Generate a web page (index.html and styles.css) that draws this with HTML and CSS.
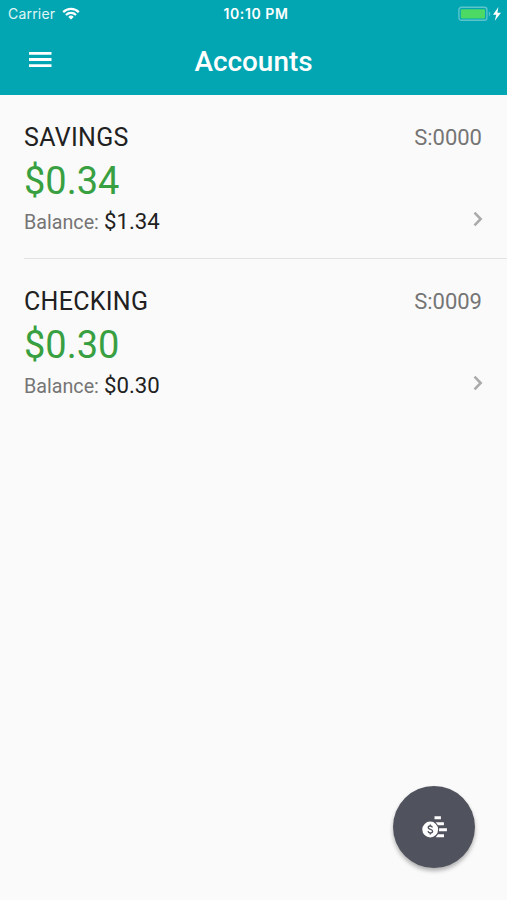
FILE: index.html
```
<!DOCTYPE html>
<html lang="en">
<head>
<meta charset="utf-8">
<title>Accounts</title>
<link rel="stylesheet" href="styles.css">
</head>
<body>
<header class="header">
  <div class="status">
    <div class="carrier"><span>Carrier</span>
      <svg class="wifi" width="18" height="13" viewBox="0 0 18 13" fill="none" stroke="#fff" stroke-width="2.2"><path d="M1.2 5.1a11 11 0 0 1 15.6 0M4 8a7 7 0 0 1 10 0"/><path d="M9 12.6 6.3 9.9a3.8 3.8 0 0 1 5.4 0z" fill="#fff" stroke="none"/></svg>
    </div>
    <div class="time">10:10 PM</div>
    <div class="power">
      <svg width="44" height="16" viewBox="0 0 44 16"><rect x=".9" y="1.3" width="28" height="13" rx="2.6" fill="none" stroke="#5cc5cc" stroke-width="1.4"/><rect x="2.8" y="3.2" width="24.2" height="9.2" rx=".8" fill="#4cd964"/><path d="M30.8 5.6c2 .7 2 3.9 0 4.6z" fill="#5cc5cc"/><path d="M40.4 1 35 8.7h3.3l-1.5 6 6.2-8h-3.6z" fill="#fff"/></svg>
    </div>
  </div>
  <div class="toolbar">
    <svg class="menu" width="23" height="17" viewBox="0 0 23 17" fill="#fff"><path d="M0 1h22.5v2.8H0zM0 7.1h22.5v2.8H0zM0 13.2h22.5V16H0z"/></svg>
    <h1 class="title">Accounts</h1>
  </div>
</header>
<main class="accounts">
  <section class="account">
    <div class="row"><h2 class="name">SAVINGS</h2><span class="code">S:0000</span></div>
    <div class="amount">$0.34</div>
    <div class="row foot"><div><span class="label">Balance:</span> <span class="value">$1.34</span></div>
      <svg class="chevron" width="10" height="16" viewBox="0 0 10 16"><path d="m1.5 1.7 6.2 6.3-6.2 6.3"/></svg></div>
  </section>
  <section class="account">
    <div class="row"><h2 class="name">CHECKING</h2><span class="code">S:0009</span></div>
    <div class="amount">$0.30</div>
    <div class="row foot"><div><span class="label">Balance:</span> <span class="value">$0.30</span></div>
      <svg class="chevron" width="10" height="16" viewBox="0 0 10 16"><path d="m1.5 1.7 6.2 6.3-6.2 6.3"/></svg></div>
  </section>
</main>
<button class="fab" aria-label="Money">
  <svg class="coins" width="26" height="24" viewBox="0 0 26 24"><g fill="#fff"><path d="M12.5 1.2h6.4v3h-6.4zM13.7 7.2h8.2v3H16zM17.2 13.3h7.7v3h-7.9zM16 19.2h6v3h-8.2z"/><circle cx="8.2" cy="14.5" r="7.9"/></g><path d="M10.4 12.5c-.3-1-1.1-1.5-2.1-1.5-1.2 0-2.1.6-2.1 1.6 0 2.3 4.4 1.3 4.4 3.7 0 1.1-1 1.7-2.2 1.7s-2.2-.6-2.4-1.8M8.3 9.6V11m0 7v1.4" fill="none" stroke="#50535d" stroke-width="1.3"/></svg>
</button>
</body>
</html>
```
FILE: styles.css
```
* { box-sizing: border-box; }
body {
  margin: 0;
  height: 900px;
  background: #fafafa;
  font-family: Roboto, "Liberation Sans", sans-serif;
  color: #212121;
  overflow: hidden;
}
svg { display: block; flex: none; }
.header { height: 95px; background: #02a6b3; color: #fff; }
.status {
  height: 27px;
  padding: 0 5px 0 8px;
  display: grid;
  grid-template-columns: 1fr auto 1fr;
  align-items: center;
  font-family: Inter, sans-serif;
  font-size: 14px;
}
.carrier { display: flex; align-items: center; gap: 7px; color: #e2f6f7; letter-spacing: .2px; }
.time { font-size: 14px; font-weight: 600; letter-spacing: .6px; padding-left: 2px; }
.power { justify-self: end; }
.toolbar {
  height: 68px;
  padding: 1px 29px 0;
  display: grid;
  grid-template-columns: 1fr auto 1fr;
  align-items: center;
}
.menu { margin-top: -4px; }
.title { margin: 0; font-size: 27.9px; font-weight: 500; line-height: 34px; }
.account { height: 163px; padding: 27px 25px 0 0; margin-left: 24px; }
.account + .account { border-top: 1px solid #e2e2e2; }
.row { display: flex; justify-content: space-between; align-items: center; height: 30px; }
.name { margin: 0; font-size: 25px; font-weight: 400; letter-spacing: .3px; }
.code { font-size: 22px; color: #757575; }
.amount { height: 58px; line-height: 58px; font-size: 38px; color: #39a042; }
.foot { height: 25px; line-height: 25px; }
.label { font-size: 19.7px; color: #757575; }
.value { font-size: 22.2px; margin-left: 1.2px; }
.chevron { fill: none; stroke: #aaa; stroke-width: 2.5; margin: -8px -1px 0 0; }
.fab {
  position: absolute;
  left: 393px;
  top: 786px;
  width: 82px;
  height: 82px;
  padding: 0;
  border: 0;
  border-radius: 50%;
  background: #50535d;
  display: flex;
  align-items: center;
  justify-content: center;
  box-shadow: 0 3px 4px rgba(0, 0, 0, .3);
}
.coins { margin-left: 2px; }
```
